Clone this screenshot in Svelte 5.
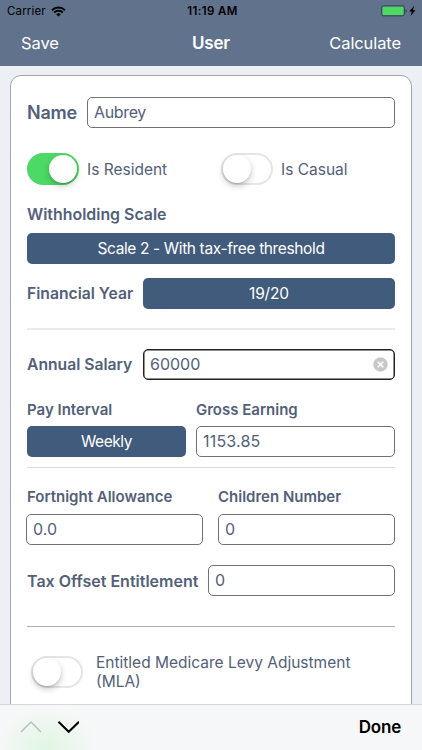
<script>
  let name = "Aubrey";
  let salary = "60000";
  let gross = "1153.85";
  let allowance = "0.0";
  let children = "0";
  let taxOffset = "0";

  let resident = true;
  let casual = false;
  let medicare = false;
</script>

<div class="screen">
  <header>
    <div class="status">
      <div class="carrier">
        <span>Carrier</span>
        <svg width="15" height="11" viewBox="0 0 15 11">
          <path d="M1 4.2a9.3 9.3 0 0 1 13 0M3.2 6.5a6.1 6.1 0 0 1 8.6 0" fill="none" stroke="#000" stroke-width="1.9" />
          <path d="M7.5 10.6 5.2 8.3a3.3 3.3 0 0 1 4.6 0z" />
        </svg>
      </div>
      <span class="time">11:19 AM</span>
      <svg class="battery" width="37" height="12" viewBox="0 0 37 12">
        <rect x=".6" y=".9" width="22.8" height="10" rx="2" fill="none" stroke="#35424f" />
        <rect x="1.5" y="1.8" width="21" height="8.2" rx="1" fill="#4cd964" />
        <path d="M24.6 4.2q1.3.5 1.3 1.8t-1.3 1.8z" fill="#35424f" />
        <path d="m33.2.8-5 5.8h2.6l-1.2 4.3 4.8-5.7h-2.5z" />
      </svg>
    </div>
    <nav>
      <button class="nav-button save">Save</button>
      <h1>User</h1>
      <button class="nav-button calculate">Calculate</button>
    </nav>
  </header>

  <main>
    <div class="card">
      <div class="row">
        <label class="name" for="name">Name</label>
        <input id="name" class="grow" bind:value={name} />
      </div>

      <div class="row switches">
        <div class="option">
          <button class="switch" class:on={resident} aria-label="Is Resident" on:click={() => (resident = !resident)}></button>
          <span>Is Resident</span>
        </div>
        <div class="option">
          <button class="switch" class:on={casual} aria-label="Is Casual" on:click={() => (casual = !casual)}></button>
          <span>Is Casual</span>
        </div>
      </div>

      <div class="label scale-label">Withholding Scale</div>
      <button class="picker scale">Scale 2 - With tax-free threshold</button>

      <div class="row year">
        <span class="label year-label">Financial Year</span>
        <button class="picker grow">19/20</button>
      </div>

      <hr class="thick" />

      <div class="row salary">
        <label class="label salary-label" for="salary">Annual Salary</label>
        <div class="field grow">
          <input id="salary" class="active" bind:value={salary} />
          <button class="clear" aria-label="Clear" on:click={() => (salary = "")}>
            <svg width="15" height="15" viewBox="0 0 15 15">
              <circle cx="7.5" cy="7.5" r="7.2" fill="#c8c8cb" />
              <path d="m4.7 4.7 5.6 5.6m0-5.6-5.6 5.6" stroke="#fff" stroke-width="1.6" />
            </svg>
          </button>
        </div>
      </div>

      <div class="row pay">
        <div class="column interval">
          <span class="label interval-label">Pay Interval</span>
          <button class="picker weekly">Weekly</button>
        </div>
        <div class="column grow">
          <label class="label gross-label" for="gross">Gross Earning</label>
          <input id="gross" bind:value={gross} />
        </div>
      </div>

      <hr class="light" />

      <div class="row extras">
        <div class="column allowance">
          <label class="label allowance-label" for="allowance">Fortnight Allowance</label>
          <input id="allowance" bind:value={allowance} />
        </div>
        <div class="column grow">
          <label class="label children-label" for="children">Children Number</label>
          <input id="children" bind:value={children} />
        </div>
      </div>

      <div class="row offset">
        <label class="label offset-label" for="offset">Tax Offset Entitlement</label>
        <input id="offset" class="grow" bind:value={taxOffset} />
      </div>

      <hr class="dark" />

      <div class="option medicare">
        <button class="switch" class:on={medicare} aria-label="Entitled Medicare Levy Adjustment" on:click={() => (medicare = !medicare)}></button>
        <span>Entitled Medicare Levy Adjustment (MLA)</span>
      </div>
    </div>
  </main>

  <footer>
    <svg width="59" height="14" viewBox="0 0 59 14" fill="none" stroke-width="2">
      <path d="M1 12 11 2l10 10" stroke="#b9bfbc" stroke-width="1.5" />
      <path d="m38.5 1.8 10.2 10L59 1.8" stroke="#000" />
    </svg>
    <button class="done">Done</button>
  </footer>
</div>

<style>
  :global(body) {
    margin: 0;
  }

  .screen {
    display: flex;
    flex-direction: column;
    width: 422px;
    height: 750px;
    overflow: hidden;
    background: #ecf0f4;
    color: #536079;
    font-family: Inter, "Liberation Sans", sans-serif;
    font-size: 16px;
  }

  button {
    border: 0;
    padding: 0;
    background: none;
    color: inherit;
    font: inherit;
    letter-spacing: inherit;
  }

  header {
    flex: none;
    height: 66px;
    background: #61728c;
  }

  .status {
    display: grid;
    grid-template-columns: 1fr auto 1fr;
    align-items: center;
    height: 22px;
    padding: 0 4px 0 7px;
    color: #000;
    font-size: 11.5px;
  }

  .carrier {
    display: flex;
    align-items: center;
    gap: 5px;
    letter-spacing: 0.15px;
  }

  .time {
    font-weight: 600;
    letter-spacing: 0.4px;
  }

  .battery {
    justify-self: end;
  }

  nav {
    display: grid;
    grid-template-columns: 1fr auto 1fr;
    align-items: center;
    height: 42px;
    padding: 0 21px;
    color: #fff;
  }

  .nav-button {
    justify-self: start;
    font-size: 16.5px;
    letter-spacing: -0.1px;
  }

  .calculate {
    justify-self: end;
  }

  h1 {
    margin: 0;
    font-size: 17px;
    font-weight: 600;
    letter-spacing: -0.2px;
  }

  main {
    flex: 1;
    min-height: 0;
    overflow: hidden;
    padding: 9px 10px 0;
  }

  .card {
    box-sizing: border-box;
    height: 700px;
    padding: 21px 16px 0;
    border: 1px solid #a2a5a9;
    border-radius: 11px;
    background: #fff;
  }

  .row {
    display: flex;
    align-items: center;
  }

  .column {
    display: flex;
    flex-direction: column;
  }

  .grow {
    flex: 1;
    min-width: 0;
  }

  .name {
    width: 60px;
    font-size: 18px;
    font-weight: 600;
    letter-spacing: -0.2px;
  }

  .label {
    font-size: 15px;
    font-weight: 600;
    line-height: 20px;
    white-space: nowrap;
  }

  input {
    box-sizing: border-box;
    width: 100%;
    height: 31px;
    margin: 0;
    border: 1px solid #737373;
    border-radius: 5px;
    padding: 0 6px 2px;
    outline: none;
    background: #fff;
    color: #536079;
    font: inherit;
    letter-spacing: inherit;
  }

  #name {
    letter-spacing: -0.35px;
  }

  #gross {
    letter-spacing: 0.2px;
  }

  .active {
    border: 1px solid #222;
    box-shadow: inset 0 0 0 0.5px #222;
  }

  .picker {
    height: 31px;
    border-radius: 5px;
    background: #405b7b;
    color: #fff;
    font-size: 15.5px;
    letter-spacing: -0.15px;
  }

  .switches {
    margin-top: 25px;
  }

  .option {
    flex: none;
    display: flex;
    align-items: center;
    gap: 8px;
    width: 194px;
    font-size: 15.5px;
  }

  .switch {
    flex: none;
    box-sizing: border-box;
    display: flex;
    align-items: center;
    width: 52px;
    height: 32px;
    border: 2px solid #e5e5e5;
    border-radius: 16px;
    background: #fff;
  }

  .switch::before {
    content: "";
    width: 28px;
    height: 28px;
    border-radius: 50%;
    background: #fff;
    box-shadow: 0 3px 6px rgba(0, 0, 0, 0.22), 0 1px 1px rgba(0, 0, 0, 0.12);
  }

  .switch.on {
    justify-content: flex-end;
    border-color: #4cd964;
    background: #4cd964;
  }

  .scale-label {
    margin-top: 20px;
    font-size: 15.9px;
  }

  .scale {
    display: block;
    width: 100%;
    margin-top: 8px;
    letter-spacing: -0.37px;
  }

  .year {
    margin-top: 14px;
  }

  .year-label,
  .salary-label {
    width: 116px;
    font-size: 15.7px;
  }

  hr {
    height: 1px;
    margin: 0;
    border: 0;
  }

  .thick {
    height: 2px;
    margin-top: 19px;
    background: #ebebec;
  }

  .salary {
    margin-top: 19px;
  }

  .field {
    position: relative;
    display: flex;
  }

  .clear {
    position: absolute;
    top: 8px;
    right: 7px;
    width: 15px;
    height: 15px;
  }

  .clear svg {
    display: block;
  }

  .pay {
    gap: 10px;
    margin-top: 20px;
  }

  .interval {
    width: 159px;
  }

  .weekly {
    letter-spacing: -0.45px;
  }

  .pay .column,
  .extras .column {
    gap: 7px;
  }

  .pay .column {
    gap: 6px;
  }

  .light {
    margin-top: 10px;
    background: #dcdcde;
  }

  .extras {
    gap: 15px;
    margin: 19px 0 0 -1px;
  }

  .allowance {
    width: 177px;
  }

  .allowance-label {
    padding-left: 1px;
  }

  .offset {
    margin-top: 20px;
  }

  .offset-label {
    width: 181px;
    font-size: 16px;
  }

  .dark {
    margin-top: 30px;
    background: #acaeaf;
  }

  .medicare {
    gap: 13px;
    width: auto;
    margin: 26px 0 0 4px;
    line-height: 19px;
  }

  footer {
    box-sizing: border-box;
    flex: none;
    display: flex;
    align-items: center;
    justify-content: space-between;
    height: 46px;
    border-top: 1px solid #d5d8da;
    padding: 0 21px 2px 20px;
    background: radial-gradient(ellipse 50px 42px at 47px 44px, #e0f6e3, rgba(224, 246, 227, 0)), #f6f7f8;
    color: #000;
  }

  .done {
    font-size: 17px;
    font-weight: 600;
    letter-spacing: -0.2px;
  }
</style>
